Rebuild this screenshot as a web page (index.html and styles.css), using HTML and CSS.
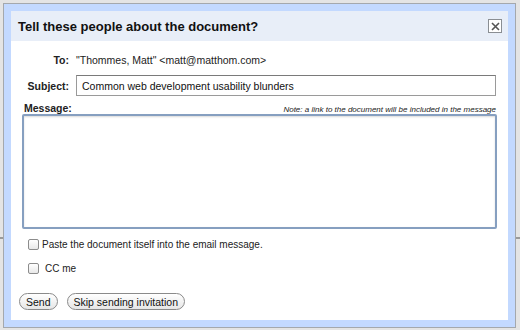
FILE: index.html
```html
<!DOCTYPE html>
<html lang="en">
<head>
    <meta charset="UTF-8">
    <title>Share document</title>
    <link rel="stylesheet" href="styles.css">
</head>
<body>
    <div class="dialog">
        <div class="dialog-inner">
            <!-- Title bar -->
            <div class="titlebar">
                <span class="title">Tell these people about the document?</span>
                <span class="close">
                    <svg width="9" height="9" viewBox="0 0 9 9"><path d="M1 1L8 8M8 1L1 8" stroke="#555" stroke-width="1.6"/></svg>
                </span>
            </div>

            <div class="form">
                <div class="label">To:</div>
                <div class="value">"Thommes, Matt" &lt;matt@matthom.com&gt;</div>

                <div class="label">Subject:</div>
                <input class="subject" type="text" value="Common web development usability blunders">
            </div>

            <div class="message-head">
                <span class="message-label">Message:</span>
                <span class="note">Note: a link to the document will be included in the message</span>
            </div>
            <textarea class="message"></textarea>

            <label class="check"><span class="box"></span>Paste the document itself into the email message.</label>
            <label class="check cc"><span class="box"></span>CC me</label>

            <div class="buttons">
                <button class="btn">Send</button>
                <button class="btn">Skip sending invitation</button>
            </div>
        </div>
    </div>
</body>
</html>
```

FILE: styles.css
```css
html, body {
    margin: 0;
    height: 100%;
}

body {
    font-family: "Liberation Sans", Arial, sans-serif;
    font-size: 10px;
    color: #000;
    /* faint page line showing behind the dialog */
    background: linear-gradient(to bottom, transparent 237px, #9a9a9a 237px, #9a9a9a 239px, transparent 239px), #e4e4e4;
    padding: 3px 4px 2px 3px;
    box-sizing: border-box;
}

.dialog {
    height: 100%;
    box-sizing: border-box;
    border: 1px solid #a4a8ad;
    background-color: #c3d9ff;
    padding: 7px;
    display: flex;
}

.dialog-inner {
    flex: 1;
    background-color: #fff;
    display: flex;
    flex-direction: column;
}

/* Title bar */
.titlebar {
    height: 30px;
    background-color: #e8eef8;
    display: flex;
    align-items: center;
    justify-content: space-between;
    padding: 0 6px 0 7px;
}

.title {
    font-weight: bold;
    font-size: 13px;
    color: #111;
}

.close {
    width: 12px;
    height: 12px;
    border: 1px solid #8a8e93;
    background-color: #fff;
    display: flex;
    justify-content: center;
    align-items: center;
}

/* To / Subject rows */
.form {
    display: grid;
    grid-template-columns: 58px 1fr;
    column-gap: 7px;
    row-gap: 8px;
    align-items: center;
    padding: 12px 12px 0 0;
}

.label {
    text-align: right;
    font-weight: bold;
    font-size: 10.5px;
    color: #222;
}

.value {
    color: #222;
    font-size: 10.5px;
    height: 14px;
    line-height: 14px;
}

.subject {
    font-family: inherit;
    font-size: 10.5px;
    height: 21px;
    box-sizing: border-box;
    border: 1px solid #9a9a9a;
    border-top-color: #7a7a7a;
    padding: 0 5px;
    margin: 0;
    color: #111;
}

/* Message area */
.message-head {
    display: flex;
    justify-content: space-between;
    align-items: flex-end;
    padding: 5px 12px 0 13px;
    height: 13px;
}

.message-label {
    font-weight: bold;
    font-size: 10.5px;
    color: #222;
}

.note {
    font-style: italic;
    font-size: 8px;
    color: #222;
}

.message {
    margin: 0 11px 0 11px;
    height: 115px;
    box-sizing: border-box;
    border: 2px solid #869fc0;
    border-radius: 2px;
    box-shadow: inset 0 1px 2px rgba(0, 0, 0, 0.15);
    resize: none;
}

/* Checkboxes */
.check {
    display: flex;
    align-items: center;
    padding-left: 17px;
    margin-top: 10px;
    color: #222;
}

.check.cc {
    margin-top: 13px;
}

.box {
    width: 9px;
    height: 9px;
    border: 1px solid #8c8c8c;
    border-radius: 2px;
    background: linear-gradient(#fff, #e8e8e8);
    margin-right: 3px;
}

.check.cc .box {
    margin-right: 6px;
}

/* Buttons */
.buttons {
    display: flex;
    gap: 9px;
    padding-left: 8px;
    margin-top: 19px;
}

.btn {
    font-family: inherit;
    font-size: 10.5px;
    height: 17px;
    padding: 0 6px;
    border: 1px solid #8a8a8a;
    border-radius: 9px;
    background: linear-gradient(#fff, #e6e6e6);
    color: #111;
}
```
